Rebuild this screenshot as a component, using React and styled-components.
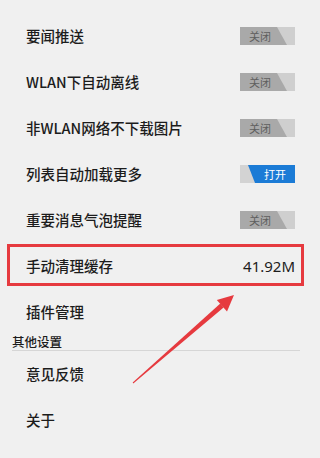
import React from 'react';
import styled, { createGlobalStyle } from 'styled-components';

const GlobalStyle = createGlobalStyle`
  html, body {
    margin: 0;
    padding: 0;
    background: #f0f0f0;
  }
  * {
    box-sizing: border-box;
  }
`;

const Page = styled.div`
  position: relative;
  width: 312px;
  height: 458px;
  overflow: hidden;
  background: #f0f0f0;
  padding-top: 13px;
  font-family: "Noto Sans CJK SC", "Noto Sans", sans-serif;
  color: #1c1c1c;
`;

const Row = styled.div`
  position: relative;
  height: 46px;
  display: flex;
  align-items: center;
  justify-content: space-between;
  padding: 0 17px 0 26px;

  ${props => props.highlighted && `
    &::after {
      content: '';
      position: absolute;
      top: 1px;
      bottom: 3px;
      left: 7px;
      right: 8px;
      border: 3px solid #e63a3f;
      pointer-events: none;
    }
  `}
`;

const Label = styled.span`
  font-size: 14.5px;
  font-weight: 500;
  line-height: 1;
`;

const Value = styled.span`
  font-family: "Noto Sans", "Noto Sans CJK SC", sans-serif;
  font-size: 15px;
  line-height: 1;
  color: #1c1c1c;
`;

const Toggle = styled.div`
  position: relative;
  width: 55px;
  height: 18px;
  background: ${props => props.on ? '#d3d3d3' : '#cfcfcf'};
  overflow: hidden;
`;

const ToggleFill = styled.div`
  position: absolute;
  inset: 0;
  background: ${props => props.on ? '#1b7bd6' : '#a9a9a9'};
  clip-path: ${props => props.on
    ? 'polygon(8px 0, 100% 0, 100% 100%, 15px 100%)'
    : 'polygon(0 0, 37px 0, 47px 100%, 0 100%)'};
`;

const ToggleText = styled.span`
  position: absolute;
  top: 0;
  bottom: 0;
  display: flex;
  align-items: center;
  font-size: 11px;
  line-height: 1;
  color: ${props => props.on ? '#ffffff' : '#5e5e5e'};
  ${props => props.on ? 'right: 9px;' : 'left: 9px;'}
`;

const SectionHeader = styled.div`
  height: 16px;
  margin: 0 12px 0 12px;
  border-bottom: 1px solid #d6d6d6;
  font-size: 12.5px;
  font-weight: 500;
  line-height: 13px;
  color: #1c1c1c;
`;

const Overlay = styled.svg`
  position: absolute;
  left: 0;
  top: 0;
  pointer-events: none;
`;

const Switch = ({ on }) => (
  <Toggle on={on}>
    <ToggleFill on={on} />
    <ToggleText on={on}>{on ? '打开' : '关闭'}</ToggleText>
  </Toggle>
);

const settings = [
  { label: '要闻推送', on: false },
  { label: 'WLAN下自动离线', on: false },
  { label: '非WLAN网络不下载图片', on: false },
  { label: '列表自动加载更多', on: true },
  { label: '重要消息气泡提醒', on: false },
];

const App = () => {
  return (
    <>
      <GlobalStyle />
      <Page>
        {settings.map((item) => (
          <Row key={item.label}>
            <Label>{item.label}</Label>
            <Switch on={item.on} />
          </Row>
        ))}

        <Row highlighted>
          <Label>手动清理缓存</Label>
          <Value>41.92M</Value>
        </Row>

        <Row>
          <Label>插件管理</Label>
        </Row>

        <SectionHeader>其他设置</SectionHeader>

        <Row>
          <Label>意见反馈</Label>
        </Row>
        <Row>
          <Label>关于</Label>
        </Row>

        {/* 빨간 화살표 */}
        <Overlay width="312" height="458" viewBox="0 0 312 458">
          <polygon
            points="133.3,383.4 132.7,382.6 220.3,303.6 223.6,307.4"
            fill="#e63a3f"
          />
          <polygon
            points="234,295 216.8,300.0 227.0,311.5"
            fill="#e63a3f"
          />
        </Overlay>
      </Page>
    </>
  );
};

export default App;
